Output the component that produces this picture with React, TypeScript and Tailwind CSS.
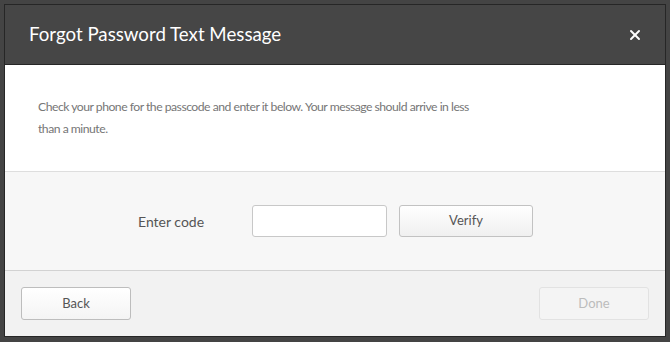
import { X } from 'lucide-react'

export default function App() {
  return (
    <div className="w-[670px] h-[342px] bg-[#444444] pt-[4px] px-[4px] pb-[5px] font-['Lato',sans-serif]">
      <div className="h-full flex flex-col border border-[#262626] bg-white">
        {/* Header */}
        <div className="h-[60px] shrink-0 bg-[#464646] border-b border-[#262626] flex items-center justify-between pl-[24px] pr-[22px]">
          <h1 className="text-[18.7px] text-white font-normal">Forgot Password Text Message</h1>
          <button className="text-white">
            <X className="w-[16px] h-[16px]" strokeWidth={3} />
          </button>
        </div>

        {/* Message */}
        <div className="h-[107px] shrink-0 bg-white px-[33px] pt-[31px] border-b border-[#dedede]">
          <p className="max-w-[440px] text-[12.2px] tracking-[-0.5px] leading-[22px] text-[#767676]">
            Check your phone for the passcode and enter it below. Your message should arrive in less than a minute.
          </p>
        </div>

        {/* Code entry */}
        <div className="h-[99px] shrink-0 bg-[#f7f7f7] border-b border-[#d2d2d2] flex items-center pl-[133px]">
          <label className="text-[14px] text-[#555555] w-[114px]">Enter code</label>
          <input className="w-[135px] h-[32px] bg-white border border-[#c8c8c8] rounded-[3px] outline-none" />
          <button className="ml-[12px] w-[134px] h-[32px] rounded-[3px] border border-[#c2c2c2] bg-gradient-to-b from-white to-[#f0f0f0] text-[13px] text-[#555555]">
            Verify
          </button>
        </div>

        {/* Footer */}
        <div className="flex-1 bg-[#f2f2f2] flex items-center justify-between px-[16px]">
          <button className="w-[110px] h-[33px] rounded-[3px] border border-[#bdbdbd] bg-gradient-to-b from-white to-[#f4f4f4] text-[13px] text-[#555555]">
            Back
          </button>
          <button className="w-[110px] h-[33px] rounded-[3px] border border-[#e2e2e2] bg-[#f4f4f4] text-[13px] text-[#bcbcbc]" disabled>
            Done
          </button>
        </div>
      </div>
    </div>
  )
}
